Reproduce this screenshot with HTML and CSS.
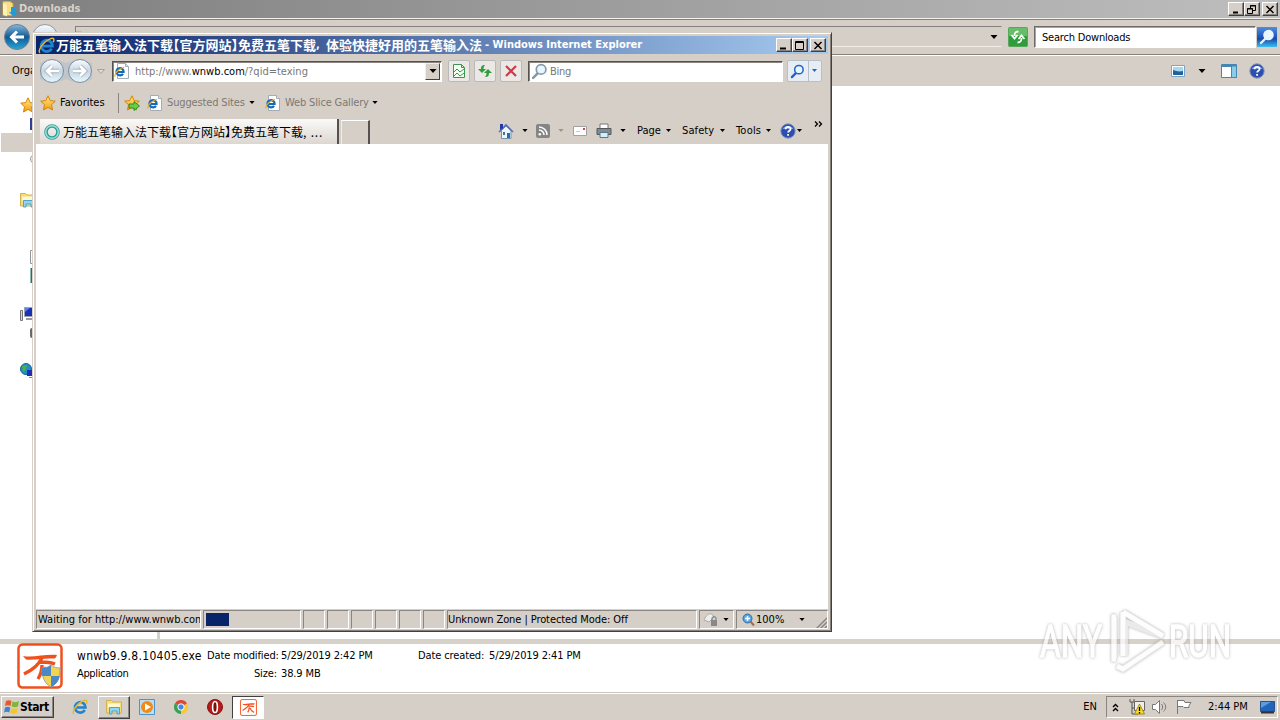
FILE: index.html
```
<!DOCTYPE html>
<html lang="en">
  <head>
    <meta charset="UTF-8" />
    <meta name="viewport" content="width=device-width, initial-scale=1.0" />
    <title>Downloads</title>
    <link rel="stylesheet" href="styles.css">
  </head>
  <body>
    <!-- shared icons -->
    <svg class="defs" width="0" height="0">
      <defs>
        <linearGradient id="blueBall" x2="0" y2="1"><stop stop-color="#87b9dc"/><stop offset=".5" stop-color="#135a94"/><stop offset="1" stop-color="#28a6d8"/></linearGradient>
        <linearGradient id="glass" x2="0" y2="1"><stop stop-color="#fafdff"/><stop offset=".5" stop-color="#c6d6e2"/><stop offset="1" stop-color="#e6f8ff"/></linearGradient>
        <linearGradient id="gold" x2="0" y2="1"><stop stop-color="#fff08a"/><stop offset="1" stop-color="#f39b13"/></linearGradient>
        <symbol id="star" viewBox="0 0 16 16"><path d="M8 .8l2.200 4.800 5.100.6-3.800 3.500 1 5.300L8 12.400 3.500 15l1-5.300L.7 6.200l5.100-.6z" fill="url(#gold)" stroke="#d98200" stroke-linejoin="round"/></symbol>
        <symbol id="ie" viewBox="0 0 16 16"><path d="M12.800 11A5.300 5.300 0 1 1 13.500 8.500H4.500" fill="none" stroke="#2184d0" stroke-width="2.600"/><path d="M2 14.800C-1 13.500 4.500 4.500 12 1.500c3-1 3.500.8 2.400 3.400" fill="none" stroke="#e9b92c" stroke-width="1.400"/></symbol>
        <symbol id="iepage" viewBox="0 0 16 16"><path d="M3.500.5h8l3 3v12h-11z" fill="#fff" stroke="#a3adb8"/><path d="M11.500.5v3h3" fill="#dde5ec" stroke="#a3adb8"/><path d="M9 10.800A3.600 3.600 0 1 1 9.600 9H3" fill="none" stroke="#1668b8" stroke-width="2.200"/><path d="M1 13.500C0 11 5 5 10 4.500" fill="none" stroke="#e0b020" stroke-width="1.200"/></symbol>
        <symbol id="folder" viewBox="0 0 16 16"><path d="M.5 1.500h5l1.500 1.500h8.500v11H.5z" fill="#f6dc76" stroke="#d3b252"/><path d="M2 4.500h12v4H2z" fill="#fff8cc"/><path d="M3.500 15V8.500h10V15H11v-3H6v3z" fill="#8fd6f2" stroke="#4ba5d0"/></symbol>
        <symbol id="lens" viewBox="0 0 16 16"><path d="M2 14l4.500-4.500" stroke="currentColor" stroke-width="2.400" stroke-linecap="round"/><circle cx="9.500" cy="6" r="4.500" fill="#eaf6ff" stroke="currentColor" stroke-width="1.600"/></symbol>
        <symbol id="help" viewBox="0 0 16 16"><circle cx="8" cy="8" r="7.200" fill="#2c4fae" stroke="#8a95b5"/><path d="M2.500 6a6 5 0 0 1 11 0z" fill="#7f9ee0"/><path d="M5.600 6.200C5.600 3 10.600 3.200 10.600 6c0 1.700-2.500 1.700-2.500 3.600M8.100 11v1.800" fill="none" stroke="#fff" stroke-width="1.800"/></symbol>
        <symbol id="down" viewBox="0 0 7 4"><path d="M0 0h7L3.500 4z" fill="currentColor"/></symbol>
        <symbol id="wn" viewBox="0 0 46 46"><rect x="1.500" y="1.500" width="43" height="43" rx="4" fill="#fff" stroke="#f0501e" stroke-width="2.500"/><path d="M6 13c10 2 22-2 34-1-1 3-2 3.500-4 3.500-10-.5-20 2-27 1z" fill="#f0501e"/><path d="M25 15c-4 7-8 11-18 16M23 19c5 1 8-1 15 2M25 22c0 6-1 9-4 14M27 24c2 6 5 10 11 12" fill="none" stroke="#f0501e" stroke-width="3.400"/></symbol>
      </defs>
    </svg>

    <div class="desktop">
      <!-- Explorer window -->
      <div class="explorer">
        <div class="ex-title">
          <svg class="ex-icon" width="16" height="16" viewBox="0 0 16 16"><path d="M1 .5h7l3 2v12H1z" fill="#f6dd86" stroke="#c8a951"/><path d="M1 2l4 2v11.500l-4-2z" fill="#fff2b0"/><path d="M9 6h5v5h2l-4.500 5L7 11h2z" fill="#239bd6"/></svg>
          <b class="ex-name">Downloads</b>
          <div class="win-buttons">
            <span class="wb"><svg width="10" height="9"><path d="M2 7.500h5" stroke="#000" stroke-width="2"/></svg></span>
            <span class="wb"><svg width="10" height="9" fill="none" stroke="#000"><path d="M3.500 3V.5h5v5H6M3 1h6M.5 3.500h5v5h-5zM0 4h6"/></svg></span>
            <span class="wb wb-close"><svg width="10" height="9"><path d="M1.500 1l7 7M8.500 1l-7 7" stroke="#000" stroke-width="1.500"/></svg></span>
          </div>
        </div>
        <div class="ex-nav">
          <svg class="ex-back" width="62" height="28" viewBox="0 0 62 28"><circle cx="42" cy="14" r="12.500" fill="url(#glass)" stroke="#8c98a2"/><circle cx="14" cy="14" r="12.500" fill="url(#blueBall)" stroke="#6c8193"/><path d="M21 14H9M14 8.500L8.500 14l5.500 5.500" fill="none" stroke="#fff" stroke-width="3"/></svg>
          <div class="ex-address">
            <svg width="14" height="16"><use href="#folder"/></svg>
            <svg class="ex-drop" width="8" height="4"><use href="#down"/></svg>
          </div>
          <svg class="ex-refresh" width="20" height="20" viewBox="0 0 20 20"><rect x=".5" y=".5" width="19" height="19" rx="1" fill="#2f9d3b" stroke="#58a75d"/><path d="M1 1h18v8H1z" fill="#68bd67"/><path d="M10.500 4.500C7 4.500 6.500 6 6.500 9M3.500 8l3 3.500 3-3.500M9.500 15.500c3.500 0 4-1.500 4-4.500M10.500 12l3-3.500 3 3.500" fill="none" stroke="#fff" stroke-width="1.800"/></svg>
          <div class="ex-search">Search Downloads</div>
          <div class="ex-go"><svg width="16" height="16"><use href="#lens"/></svg></div>
        </div>
        <div class="ex-toolbar">
          <span class="organize">Organize</span>
          <svg class="view-icon" width="14" height="12" viewBox="0 0 14 12"><path d="M.5.5h13v11H.5z" fill="#fff" stroke="#7da4c5"/><path d="M2 2h10v5H2z" fill="#a5d8f3"/><path d="M2 5c3 1 6 2 10 1v4H2z" fill="#23639b"/></svg>
          <svg class="view-drop" width="8" height="4"><use href="#down"/></svg>
          <svg class="pane-icon" width="16" height="14" viewBox="0 0 16 14"><path d="M.5.5h15v13H.5z" fill="#fff" stroke="#4785b3"/><path d="M1 2h14" stroke="#4785b3" stroke-width="2"/><path d="M10.500 2h5v11.500h-5z" fill="#8bcce9" stroke="#4785b3"/></svg>
          <svg width="16" height="16"><use href="#help"/></svg>
        </div>
        <div class="ex-body">
          <ul class="tree">
            <li><svg width="16" height="16"><use href="#star"/></svg></li>
            <li class="sub"><svg width="14" height="12"><path d="M0 0h14v12H0z" fill="#2c3f96"/></svg></li>
            <li class="sub selected"></li>
            <li class="sub"><svg width="10" height="16"><circle cx="5" cy="5" r="4.500" fill="#e5e9f2" stroke="#98a2b8"/></svg></li>
            <li class="group"><svg width="16" height="16"><use href="#folder"/></svg></li>
            <li></li>
            <li></li>
            <li class="sub"><svg width="12" height="14"><path d="M.5.5h11v13H.5z" fill="#fff" stroke="#8e969c"/></svg></li>
            <li class="sub"><svg width="12" height="15"><path d="M.5 0h11.500v15H.5z" fill="#1c7665"/></svg></li>
            <li class="group"><svg width="18" height="16" viewBox="0 0 18 16"><path d="M.5 4.500h2v10h-2z" fill="#d8d8d8" stroke="#777"/><path d="M4.500 1.500h13v9h-13z" fill="#1b30b4" stroke="#9aa0b8"/><path d="M5 2l5 0-5 4z" fill="#5d7de8"/><path d="M6 13h10" stroke="#999" stroke-width="2"/></svg></li>
            <li class="sub"><svg width="12" height="12"><rect y="1" width="12" height="10" rx="2" fill="#696969"/></svg></li>
            <li class="group"><svg width="18" height="16" viewBox="0 0 18 16"><circle cx="6" cy="6" r="5.500" fill="#268cc5" stroke="#17659a"/><path d="M2 3l5-1-1 5-3 2z" fill="#49ae4c"/><path d="M7 7h10v6H7z" fill="#1b30b4"/><path d="M9 14.500h8" stroke="#888"/></svg></li>
          </ul>
        </div>
        <div class="details">
          <svg class="file-icon" width="46" height="46"><use href="#wn"/><g transform="translate(25 21)"><path d="M9 1c3 2.500 6 3 9 3 0 9-2 15-9 19C2 19 0 13 0 4c3 0 6-.5 9-3z" fill="#f2d452" stroke="#8ea5bd"/><path d="M9 1v11H.3C0 9 0 7 0 4c3 0 6-.5 9-3zM9 12h8.700C17 17 14 20.500 9 23z" fill="#4a88c6"/></g></svg>
          <div class="details-grid">
            <span class="filename">wnwb9.9.8.10405.exe</span>
            <span class="label">Date modified:</span>
            <span class="value">5/29/2019 2:42 PM</span>
            <span class="label">Date created:</span>
            <span class="value">5/29/2019 2:41 PM</span>
            <span class="kind">Application</span>
            <span class="label size">Size:</span>
            <span class="value">38.9 MB</span>
          </div>
        </div>
      </div>

      <!-- Taskbar -->
      <div class="taskbar">
        <div class="start">
          <svg width="16" height="16" viewBox="0 0 16 16"><path d="M2 2c2-1.300 4-1 5.500 0l-1 5c-2-1-3.500-1-5.500 0z" fill="#e8582a"/><path d="M8.500 2.500c2 1.200 4 1 6.500-.5l-1 5.500c-2 1-4 1-6.500 0z" fill="#7cb63c"/><path d="M1 8.500c2-1 3.500-1 5.300 0l-1 5c-2-1-3.300-1-5.300 0z" fill="#3b85cf"/><path d="M7.200 9c2 1 4 1 6.500 0l-1 5c-2 1-4 1-6.500 0z" fill="#f4c62e"/></svg>
          <b>Start</b>
        </div>
        <div class="task"><svg width="16" height="16"><use href="#ie"/></svg></div>
        <div class="task raised"><svg width="16" height="16"><use href="#folder"/></svg></div>
        <div class="task"><svg width="16" height="16" viewBox="0 0 16 16"><path d="M.5.5h15v15H.5z" fill="#b9def5" stroke="#4b93c8"/><circle cx="8" cy="8" r="6" fill="#f28b16"/><path d="M6 4.500l6 3.500-6 3.500z" fill="#fff"/></svg></div>
        <div class="task"><svg width="14" height="14" viewBox="1 1 14 14"><path d="M8 8L1.900 4.500A7 7 0 0 1 14.100 4.500z" fill="#df4736"/><path d="M8 8l6.100-3.500A7 7 0 0 1 8 15z" fill="#f8c933"/><path d="M8 8v7A7 7 0 0 1 1.900 4.500z" fill="#39a251"/><circle cx="8" cy="8" r="3.200" fill="#4488ed" stroke="#fff"/></svg></div>
        <div class="task"><svg width="16" height="16" viewBox="0 0 16 16"><circle cx="8" cy="8" r="7.500" fill="#b51b1b" stroke="#8d1010"/><ellipse cx="8" cy="8" rx="2.400" ry="5.500" fill="#781010" stroke="#fff" stroke-width="1.600"/></svg></div>
        <div class="task pressed"><svg width="17" height="17"><use href="#wn"/></svg></div>
        <span class="lang">EN</span>
        <div class="tray">
          <svg class="chevrons" width="7" height="9" fill="none" stroke="#000" stroke-width="1.400"><path d="M1 4l2.500-2.500L6 4M1 8l2.500-2.500L6 8"/></svg>
          <svg class="net" width="18" height="16" viewBox="0 0 18 16"><path d="M2 0v3h4V0M4 3v12h6M4 9h3" fill="none" stroke="#555"/><path d="M6.500 2.500h10v9h-10z" fill="#eee" stroke="#666"/><path d="M11.500 5l5 10h-10z" fill="#f8dc26" stroke="#a88b10"/><path d="M11.500 8v4M11.500 13v1.500" stroke="#000" stroke-width="1.300"/></svg>
          <svg class="vol" width="16" height="14" viewBox="0 0 16 14" fill="none" stroke="#777"><path d="M.5 4.500h3L7.500.5v13l-4-4h-3z" fill="#fff"/><path d="M9.500 4c1.500 2 1.500 4 0 6M11.500 2.500c3 3 3 6 0 9"/></svg>
          <svg class="flag" width="16" height="14" viewBox="0 0 16 14"><path d="M1.500 0v14M1.500.5h6.500l1 2h6l-2 3 0 2H8l-1-1H1.500" fill="#fff" stroke="#777"/></svg>
          <span class="clock">2:44 PM</span>
          <svg class="show" width="15" height="13" viewBox="0 0 15 13"><path d="M.5.5h14v10H.5z" fill="#2264ba" stroke="#28518a"/><path d="M1 1h10l-10 6z" fill="#5b9be0"/><path d="M1 11.500h13" stroke="#333" stroke-width="2"/></svg>
        </div>
      </div>

      <!-- Internet Explorer window -->
      <div class="ie-window">
        <div class="ie-title">
          <svg width="17" height="17"><use href="#ie"/></svg>
          <b class="ie-name"><span class="cjk">万能五笔输入法下载【官方网站】免费五笔下载</span><span class="comma">,</span><span class="cjk">体验快捷好用的五笔输入法</span><span class="latin">- Windows Internet Explorer</span></b>
          <div class="win-buttons">
            <span class="wb"><svg width="10" height="9"><path d="M1 7.500h6" stroke="#000" stroke-width="2"/></svg></span>
            <span class="wb"><svg width="10" height="9"><path d="M.5.500h8v8h-8zM0 1.500h9" fill="none" stroke="#000"/></svg></span>
            <span class="wb wb-close"><svg width="10" height="9"><path d="M1.500 1l7 7M8.500 1l-7 7" stroke="#000" stroke-width="1.500"/></svg></span>
          </div>
        </div>
        <div class="ie-nav">
          <svg class="ie-arrows" width="70" height="28" viewBox="0 0 70 28"><path d="M2 6q12-7 26 0 14-7 26 0v16q-12 7-26 0-14 7-26 0z" fill="#c1c5ca"/><circle cx="14" cy="14" r="11.500" fill="url(#glass)" stroke="#7c8d9a"/><circle cx="42" cy="14" r="11.500" fill="url(#glass)" stroke="#7c8d9a"/><path d="M21 14H9M14 9l-5 5 5 5M35 14h12M42 9l5 5-5 5" fill="none" stroke="#a8b6c1" stroke-width="4.500"/><path d="M21 14H9M14 9l-5 5 5 5M35 14h12M42 9l5 5-5 5" fill="none" stroke="#fff" stroke-width="2.600"/><path d="M59.500 12.500h7L63 16.500z" fill="#dedad5" stroke="#aaa49d"/></svg>
          <div class="address">
            <svg width="16" height="16"><use href="#iepage"/></svg>
            <span class="url">http://www.<em>wnwb.com</em>/?qid=texing</span>
            <span class="address-drop"><svg width="8" height="4"><use href="#down"/></svg></span>
          </div>
          <span class="nav-btn"><svg width="12" height="14" viewBox="0 0 12 14" fill="none" stroke="#3e9551"><path d="M.5.5h8l3 3v10H.5zM8.500.5v3h3" fill="#f4fff2"/><path d="M1 8l3-3 3 3 4-3M1 12l3-3 3 3 4-3"/></svg></span>
          <span class="nav-btn"><svg width="16" height="14" viewBox="0 0 16 14"><path d="M8 1c-3 0-4 1-4 4H1l4 4 4-4H6.500c0-2 .5-2.500 1.500-4zM8 13c3 0 4-1 4-4h3l-4-4-4 4h2.500c0 2-.5 2.500-1.500 4z" fill="#319e3d"/></svg></span>
          <span class="nav-btn"><svg width="12" height="12"><path d="M1 1l10 10M11 1L1 11" stroke="#ce3848" stroke-width="2.200"/></svg></span>
          <div class="bing"><svg width="17" height="17"><use href="#lens"/></svg><span>Bing</span></div>
          <div class="bing-go"><span class="go-main"><svg width="15" height="15"><use href="#lens"/></svg></span><span class="go-drop"><svg width="5" height="3"><use href="#down"/></svg></span></div>
        </div>
        <div class="favbar">
          <svg width="16" height="16"><use href="#star"/></svg>
          <span class="fav-label">Favorites</span>
          <svg class="addfav" width="16" height="16"><use href="#star"/><path d="M5 9h5V6.500l5.500 4.500-5.500 4.500V13H5z" fill="#68cf42" stroke="#2e8e24"/></svg>
          <svg class="sites-icon" width="16" height="16"><use href="#iepage"/></svg>
          <span class="dim sites">Suggested Sites</span>
          <svg class="caret" width="6" height="3"><use href="#down"/></svg>
          <svg class="slice-icon" width="16" height="16"><use href="#iepage"/></svg>
          <span class="dim slice">Web Slice Gallery</span>
          <svg class="caret" width="6" height="3"><use href="#down"/></svg>
        </div>
        <div class="tabrow">
          <div class="tab">
            <svg width="16" height="16"><circle cx="8" cy="8" r="6" fill="none" stroke="#2f9a97" stroke-width="3.600"/><circle cx="8" cy="8" r="6.300" fill="none" stroke="#9adfd6" stroke-width="1.500"/></svg>
            <span class="tab-text">万能五笔输入法下载【官方网站】免费五笔下载<span class="tab-dots">, ...</span></span>
          </div>
          <div class="newtab"></div>
          <div class="commands">
            <svg class="home" width="16" height="16" viewBox="0 0 16 16"><path d="M3.500 7.500v8h9.500v-8L8 3z" fill="#edf6fb" stroke="#7195ab"/><path d="M1 9l7-7 7 7" fill="none" stroke="#5b6fb2" stroke-width="1.600"/><path d="M2 1h3v4L2 7z" fill="#2438a8"/><path d="M9 10h3v5H9z" fill="#276caf"/><path d="M5 9h2v3H5z" fill="#526d8c"/></svg>
            <svg class="caret" width="6" height="3"><use href="#down"/></svg>
            <svg class="rss" width="14" height="14" viewBox="0 0 14 14"><rect width="14" height="14" rx="2" fill="#858585"/><circle cx="3.800" cy="10.200" r="1.300" fill="#fff"/><path d="M3 6a5 5 0 0 1 5 5M3 3a8 8 0 0 1 8 8" fill="none" stroke="#fff" stroke-width="1.500"/></svg>
            <svg class="caret faded" width="6" height="3"><use href="#down"/></svg>
            <svg class="mail" width="14" height="10" viewBox="0 0 14 10"><path d="M.5.5h13v9H.5z" fill="#fff" stroke="#a2a2a2"/><path d="M10 2h2v2h-2z" fill="#cf4545"/><path d="M3 5.500h4" stroke="#ccc"/></svg>
            <svg class="print" width="16" height="16" viewBox="0 0 16 16"><path d="M4 1h8v5H4z" fill="#fff" stroke="#777"/><path d="M1 5.500h14v6H1z" fill="#85898d" stroke="#54595e"/><path d="M4 9.500h8v5H4z" fill="#d4eff9" stroke="#58798a"/></svg>
            <svg class="caret" width="6" height="3"><use href="#down"/></svg>
            <span class="menu page">Page</span><svg class="caret" width="5" height="3"><use href="#down"/></svg>
            <span class="menu safety">Safety</span><svg class="caret" width="5" height="3"><use href="#down"/></svg>
            <span class="menu tools">Tools</span><svg class="caret" width="5" height="3"><use href="#down"/></svg>
            <svg class="help" width="16" height="16"><use href="#help"/></svg><svg class="caret tight" width="5" height="3"><use href="#down"/></svg>
            <svg class="more" width="9" height="6" fill="none" stroke="#000" stroke-width="1.300"><path d="M1 .5L3.500 3 1 5.500M5 .5L7.500 3 5 5.500"/></svg>
          </div>
        </div>
        <div class="page-view"></div>
        <div class="statusbar">
          <span class="cell waiting">Waiting for http://www.wnwb.com</span>
          <span class="cell progress"><i></i></span>
          <span class="cell slot"></span><span class="cell slot"></span><span class="cell slot"></span><span class="cell slot"></span><span class="cell slot"></span><span class="cell slot"></span>
          <span class="cell zone">Unknown Zone | Protected Mode: Off</span>
          <span class="cell lock"><svg width="17" height="15" viewBox="0 0 17 15"><path d="M1 8c2-5 5-7 8-6l2 3-5 5z" fill="#eee" stroke="#aaa"/><path d="M8 8h6v6H8z" fill="#888"/><path d="M9 8V5.500q2-2 4 0V8" fill="none" stroke="#777"/></svg><svg class="caret" width="6" height="3"><use href="#down"/></svg></span>
          <span class="cell zoom"><svg width="13" height="14" viewBox="0 0 13 14"><path d="M8 8l4 4.500" stroke="#a36c4e" stroke-width="2"/><circle cx="5.500" cy="5.500" r="4.500" fill="#58a6e0" stroke="#2b6fb0"/><path d="M3 5.500h5M5.500 3v5" stroke="#fff" stroke-width="1.500"/></svg><span>100%</span><svg class="caret" width="6" height="3"><use href="#down"/></svg><svg class="grip" width="12" height="12"><path d="M1 12L12 1M5 12l7-7M9 12l3-3" stroke="#86817c" stroke-width="1.400"/></svg></span>
        </div>
      </div>

      <!-- watermark -->
      <svg class="watermark" width="220" height="80" viewBox="0 0 220 80">
        <text x="10" y="57" textLength="62" lengthAdjust="spacingAndGlyphs">ANY</text>
        <path class="edge" d="M86 17h-2v42h2M93 12v44M93 12l40 24-38-14v34M87 66l6 3 40-27"/>
        <path d="M86 17h-2v42h2M93 12v44M93 12l40 24M87 66l6 3 40-27"/>
        <text x="139" y="57" textLength="62" lengthAdjust="spacingAndGlyphs">RUN</text>
      </svg>
    </div>
  </body>
</html>
```
FILE: styles.css
```
* {
  box-sizing: border-box;
}

body {
  margin: 0;
  font-family: "DejaVu Sans Condensed", "DejaVu Sans", "Noto Sans CJK SC", sans-serif;
  font-size: 11px;
  font-stretch: condensed;
  line-height: 14px;
  color: #000;
}

svg {
  display: block;
  flex: none;
}

.defs {
  position: absolute;
}

span, b {
  white-space: nowrap;
}

.desktop {
  position: relative;
  width: 1280px;
  height: 720px;
  overflow: hidden;
  background: #fff;
}

/* window buttons */
.win-buttons {
  display: flex;
  margin-left: auto;
}

.wb {
  width: 16px;
  height: 14px;
  display: flex;
  align-items: center;
  justify-content: center;
  background: #d6cfc7;
  border: 1px solid;
  border-color: #fff #404040 #404040 #fff;
  box-shadow: inset -1px -1px #8a8580;
}

.wb-close {
  margin-left: 2px;
}

/* Explorer */
.explorer {
  height: 692px;
  display: flex;
  flex-direction: column;
}

.ex-title {
  height: 18px;
  flex: none;
  display: flex;
  align-items: center;
  padding: 0 2px;
  background: linear-gradient(90deg, #7f7f7f, #bebebe);
  color: #d8d2ca;
}

.ex-icon {
  margin-right: 1px;
}

.ex-name {
  letter-spacing: 0.05px;
}

.ex-nav {
  height: 37px;
  flex: none;
  display: flex;
  align-items: center;
  padding-left: 3px;
  background: #d6cfc7;
  border-top: 1px solid #f5f3ef;
  border-bottom: 1px solid #85807b;
  box-shadow: inset 0 1px #85807b;
}

.ex-address {
  width: 927px;
  height: 21px;
  margin: 0 6px 0 10px;
  display: flex;
  align-items: center;
  border: 1px solid;
  border-color: #85807b #d6cfc7 #f1eeea #85807b;
}

.ex-drop {
  margin-left: auto;
  margin-right: 3px;
}

.ex-search {
  width: 222px;
  height: 22px;
  margin-left: 6px;
  padding: 4px 7px;
  line-height: 14px;
  letter-spacing: -0.2px;
  background: #fff;
  border: 1px solid;
  border-color: #6f6a66 #fff #fff #6f6a66;
  box-shadow: inset 1px 1px #aaa49d;
}

.ex-go {
  width: 20px;
  height: 20px;
  margin-left: 1px;
  padding: 2px;
  color: #e8f4ff;
  background: linear-gradient(#4e8de0, #174ab0 60%, #3ac0ef);
}

.ex-toolbar {
  height: 31px;
  flex: none;
  display: flex;
  align-items: center;
  padding: 0 15px 0 12px;
  background: #d6cfc7;
  border-top: 1px solid #fff;
}

.view-icon {
  margin-left: auto;
}

.view-drop {
  margin: 0 15px 0 13px;
}

.pane-icon {
  margin-right: 12px;
}

.ex-body {
  flex: 1;
  min-height: 0;
  background: #fff;
}

.tree {
  width: 160px;
  height: 100%;
  margin: 0;
  padding: 9px 0 0;
  list-style: none;
  border-right: 3px solid #d6cfc7;
}

.tree li {
  height: 19px;
  display: flex;
  align-items: center;
  padding-left: 20px;
}

.tree .sub {
  padding-left: 30px;
}

.tree .selected {
  margin-left: 1px;
  background: #d6cfc7;
}

.tree .group {
  margin-top: 19px;
}

.details {
  height: 53px;
  flex: none;
  display: flex;
  border-top: 5px solid #d6d2c9;
  padding-left: 17px;
}

.file-icon {
  margin: -1px 14px 0 0;
}

.details-grid {
  display: grid;
  grid-template-columns: 126px 74px 137px 71px 120px;
  grid-template-rows: 18px 18px;
  padding-top: 5px;
  letter-spacing: -0.12px;
}

.filename {
  font-size: 12px;
  letter-spacing: 0.3px;
}

.label {
  padding-left: 4px;
}

.value {
  padding-left: 4px;
}

.kind {
  letter-spacing: -0.35px;
}

.size {
  text-align: right;
}

/* taskbar */
.taskbar {
  height: 28px;
  display: flex;
  align-items: center;
  padding: 1px 2px 0 1px;
  background: #d6cfc7;
  border-top: 1px solid #c9c6be;
  box-shadow: inset 0 1px #fff;
}

.start {
  width: 53px;
  height: 22px;
  display: flex;
  align-items: center;
  padding-left: 2px;
  margin-right: 10px;
  border: 1px solid;
  border-color: #fff #404040 #404040 #fff;
  box-shadow: inset -1px -1px #8a8580;
}

.start b {
  font-size: 12px;
  letter-spacing: -0.4px;
}

.task {
  width: 32px;
  height: 23px;
  margin-right: 1.7px;
  display: flex;
  align-items: center;
  justify-content: center;
}

.raised {
  border: 1px solid;
  border-color: #fff #404040 #404040 #fff;
  box-shadow: inset -1px -1px #8a8580;
}

.pressed {
  background: #fff;
  border: 1px solid;
  border-color: #404040 #fff #fff #404040;
}

.lang {
  margin-left: auto;
  margin-right: 9px;
}

.tray {
  width: 172px;
  height: 22px;
  display: flex;
  align-items: center;
  border: 1px solid;
  border-color: #8a8580 #fff #fff #8a8580;
  padding-left: 5px;
}

.net {
  margin-left: 9px;
}

.vol {
  margin-left: 6px;
}

.flag {
  margin-left: 8px;
}

.clock {
  margin-left: 16px;
}

.show {
  margin-left: auto;
  margin-right: 2px;
}

/* IE window */
.ie-window {
  position: absolute;
  left: 32px;
  top: 32px;
  width: 800px;
  height: 600px;
  display: flex;
  flex-direction: column;
  background: #d6cfc7;
  border: 1px solid;
  border-color: #d6cfc7 #404040 #404040 #d6cfc7;
  box-shadow: inset 1px 1px #fff, inset -1px -1px #85807b;
  padding: 3px 3px 2px 3px;
}

.ie-title {
  height: 18px;
  flex: none;
  display: flex;
  align-items: center;
  padding: 0 2px;
  color: #fff;
  background: linear-gradient(90deg, #0a246a, #a6caf0);
}

.ie-name {
  display: flex;
  margin-left: 1px;
}

.cjk {
  font-family: "Noto Sans CJK SC", sans-serif;
  font-size: 13px;
  font-feature-settings: "halt";
}

.comma {
  width: 10px;
}

.latin {
  margin-left: 3px;
}

.ie-nav {
  height: 34px;
  flex: none;
  display: flex;
  align-items: center;
  padding: 0 6px 0 2px;
}

.address {
  width: 330px;
  height: 21px;
  margin-left: 4px;
  margin-right: 6px;
  display: flex;
  align-items: center;
  padding-left: 1px;
  background: #fff;
  border: 1px solid;
  border-color: #55514e #fff #fff #55514e;
  box-shadow: inset 1px 1px #8a8580;
}

.url {
  margin-left: 5px;
  padding-top: 2px;
  color: #777;
}

.url em {
  font-style: normal;
  color: #000;
}

.address-drop {
  width: 15px;
  height: 17px;
  margin-left: auto;
  margin-right: 1px;
  display: flex;
  align-items: center;
  justify-content: center;
  background: #d6cfc7;
  border: 1px solid;
  border-color: #eee #404040 #404040 #eee;
}

.nav-btn {
  width: 22px;
  height: 22px;
  margin-right: 4px;
  display: flex;
  align-items: center;
  justify-content: center;
  background: #ebe9e6;
  border: 1px solid #b9b9bb;
  border-radius: 2px;
}

.bing {
  width: 255px;
  height: 21px;
  margin-left: 2px;
  display: flex;
  align-items: center;
  padding-left: 2px;
  color: #8498a8;
  background: #fff;
  border: 1px solid;
  border-color: #55514e #fff #fff #55514e;
  box-shadow: inset 1px 1px #8a8580;
}

.bing span {
  margin-left: 2px;
  padding-top: 2px;
  color: #777;
  letter-spacing: -0.3px;
}

.bing-go {
  width: 35px;
  height: 22px;
  margin-left: 4px;
  display: flex;
  color: #2263c8;
  background: #e6edf4;
  border: 1px solid #b7bfc8;
  border-radius: 2px;
}

.go-main {
  width: 21px;
  padding: 3px 2px;
  border-right: 1px solid #b7bfc8;
}

.go-drop {
  padding: 8px 3px;
}

.favbar {
  height: 29px;
  flex: none;
  display: flex;
  align-items: center;
  padding-left: 4px;
}

.fav-label {
  width: 58px;
  margin-left: 4px;
}

.addfav {
  box-sizing: content-box;
  padding: 2px 0 2px 5px;
  border-left: 1px solid #8a8580;
}

.sites-icon {
  margin-left: 7px;
}

.dim {
  margin: 0 5px 0 4px;
  padding-top: 1px;
  color: #7d7873;
  letter-spacing: -0.15px;
}

.slice-icon {
  margin-left: 10px;
}

.sites {
  width: 77px;
}

.slice {
  width: 82px;
}

.tabrow {
  height: 27px;
  flex: none;
  display: flex;
  align-items: flex-end;
  padding-left: 4px;
}

.tab {
  width: 299px;
  height: 25px;
  display: flex;
  align-items: center;
  padding-left: 4px;
  background: linear-gradient(#fbfaf9, #dcd6cf);
  border-right: 2px solid #55514e;
}

.tab-text {
  margin-left: 3px;
  font-family: "Noto Sans CJK SC", sans-serif;
  font-size: 12px;
  font-feature-settings: "halt";
}

.tab-dots {
  letter-spacing: 0.8px;
}

.newtab {
  width: 29px;
  height: 24px;
  margin-left: 2px;
  border: 1px solid;
  border-color: #fff #55514e #d6cfc7 #eee;
  border-right-width: 2px;
  border-bottom-width: 0;
}

.commands {
  height: 27px;
  flex: 1;
  display: flex;
  align-items: center;
  padding-left: 128px;
}

.caret {
  margin: 0;
}

.home, .rss, .print {
  margin-right: 8px;
}

.rss {
  margin-left: 8px;
}

.faded {
  color: #9b958e;
}

.mail {
  margin: 0 9px;
}

.menu {
  margin-left: 11px;
}

.page {
  width: 29px;
}

.safety {
  width: 38px;
  letter-spacing: 0.1px;
}

.tools {
  width: 30px;
  letter-spacing: 0.2px;
}

.help {
  margin-left: 9px;
}

.tight {
  margin-left: 1px;
}

.more {
  margin-left: 12px;
  margin-bottom: 14px;
}

.page-view {
  flex: 1;
  background: #fff;
}

.statusbar {
  height: 20px;
  flex: none;
  display: flex;
  gap: 2px;
  padding-top: 1px;
}

.cell {
  height: 19px;
  flex: none;
  display: flex;
  align-items: center;
  border: 1px solid;
  border-color: #8a8580 #fff #fff #8a8580;
  overflow: hidden;
}

.waiting {
  width: 165px;
  padding-left: 1px;
}

.progress {
  width: 98px;
  padding-left: 2px;
}

.progress i {
  width: 23px;
  height: 13px;
  background: #0a246a;
}

.slot {
  width: 22px;
}

.zone {
  width: 250px;
  letter-spacing: -0.08px;
}

.lock {
  width: 35px;
  padding-left: 3px;
  gap: 3px;
}

.zoom {
  flex: 1;
  padding-left: 5px;
}

.zoom span {
  width: 43px;
  margin-left: 1px;
}

.zoom .grip {
  margin: 6px 0 0 auto;
}

/* watermark */
.watermark {
  position: absolute;
  left: 1030px;
  top: 600px;
  opacity: 0.75;
  fill: #fff;
  stroke: #fff;
  stroke-width: 1.5;
  font: 45px/1 Roboto, sans-serif;
  filter: drop-shadow(0 0 1.5px #999);
}

.watermark path {
  fill: none;
  stroke: #fdfdfd;
  stroke-width: 4.5;
}

.watermark .edge {
  stroke: #e4e4e4;
  stroke-width: 6;
}
```
